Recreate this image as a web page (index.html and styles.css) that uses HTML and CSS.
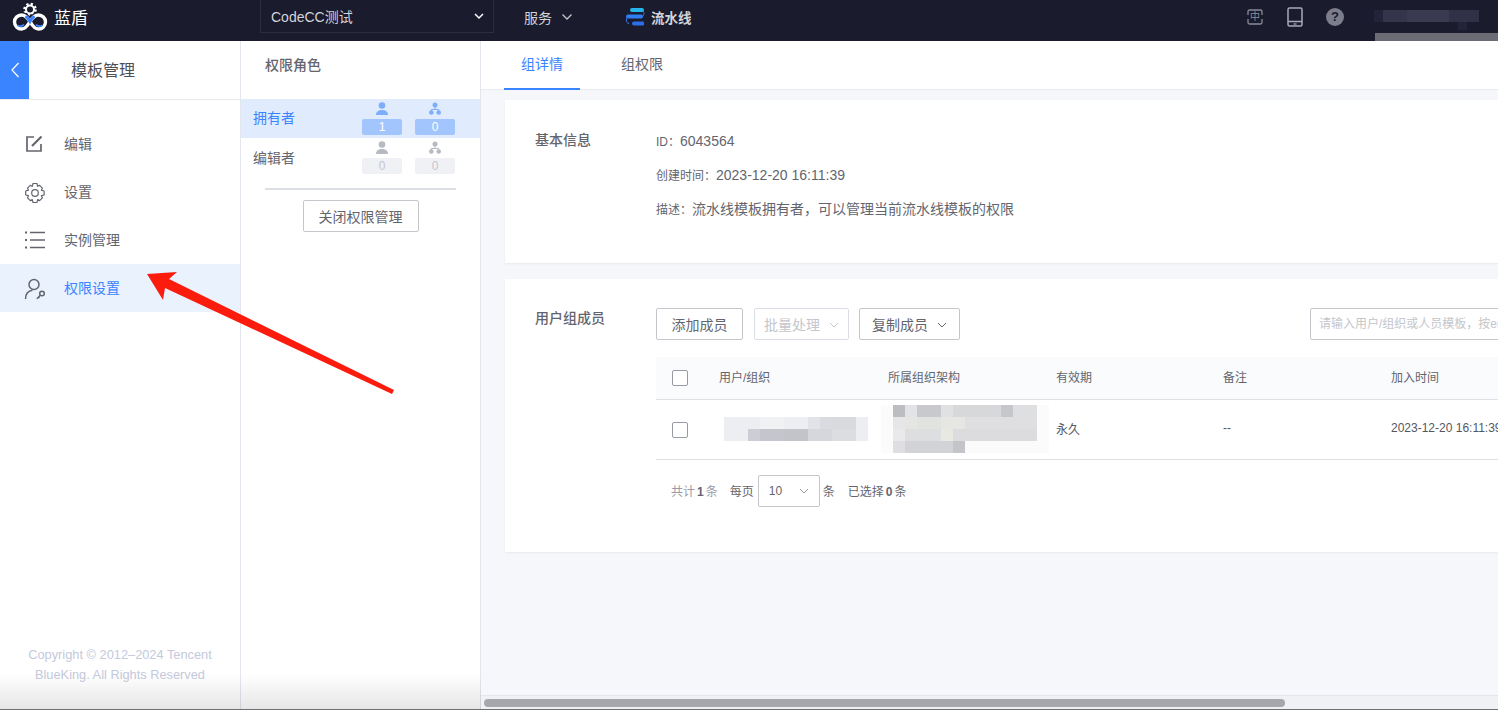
FILE: index.html
```html
<!DOCTYPE html>
<html>
<head>
    <title>蓝盾 - 权限设置</title>
    <meta charset="utf-8">
    <link rel="stylesheet" href="styles.css">
</head>
<body>
    <header class="topbar">
        <div class="logo">
            <svg width="36" height="32" viewBox="0 0 36 32">
                <g fill="none" stroke-linecap="round">
                    <circle cx="18" cy="8.500" r="5.600" stroke="#fff" stroke-width="2.400" stroke-dasharray="2.200 2.200" stroke-linecap="butt"/>
                    <circle cx="18" cy="8.500" r="4" stroke="#fff" stroke-width="2"/>
                    <path d="M18 20.500c-2.500-4-5-6.500-8.500-6.500a7 7 0 0 0 0 14c3.500 0 6-3 8.500-7.500" stroke="#1a1b2c" stroke-width="6"/>
                    <path d="M18 20.500c2.500-4 5-6.500 8.500-6.500a7 7 0 0 1 0 14c-3.500 0-6-3-8.500-7.500" stroke="#1a1b2c" stroke-width="6"/>
                    <path d="M18 20.500c-2.500-4-5-6.500-8.500-6.500a7 7 0 0 0 0 14c3.500 0 6-3 8.500-7.500" stroke="#fff" stroke-width="3.400"/>
                    <path d="M18 20.500c2.500-4 5-6.500 8.500-6.500a7 7 0 0 1 0 14c-3.500 0-6-3-8.500-7.500" stroke="#fff" stroke-width="3.400"/>
                    <path d="M14.500 16c1.500 1 2.500 2.800 3.500 4.500 1-1.700 2-3.500 3.500-4.500" stroke="#3a84ff" stroke-width="3"/>
                    <path d="M6 24.500c2 1.200 4 .5 5.500-.5M30 24.500c-2 1.200-4 .5-5.500-.5" stroke="#3a84ff" stroke-width="1.600"/>
                </g>
            </svg>
            <span>蓝盾</span>
        </div>
        <div class="project-select">
            <span>CodeCC测试</span>
            <svg width="12" height="8" viewBox="0 0 12 8"><path d="M2 2l4 4 4-4" fill="none" stroke="#fff" stroke-width="1.500"/></svg>
        </div>
        <div class="nav-service">
            <span>服务</span>
            <svg width="12" height="8" viewBox="0 0 12 8"><path d="M1.500 1.500l4.500 4.500 4.500-4.500" fill="none" stroke="#c4c6cc" stroke-width="1.300"/></svg>
        </div>
        <div class="nav-pipeline">
            <svg width="20" height="18" viewBox="0 0 20 18">
                <path d="M17 2.500c2.500 0 2.500 6 0 6M4 8.500c-3.500 0-3.500 7 0 7" fill="none" stroke="#2f7df0" stroke-width="1"/>
                <path d="M7 0h10a2 2 0 0 1 0 4H7a2 2 0 0 1 0-4z" fill="#27b5ee"/>
                <path d="M3 6.500h13a2 2 0 0 1 0 4H3a2 2 0 0 1 0-4z" fill="#2f7df0"/>
                <path d="M9 13.500h9a1 1 0 0 1 1 1v2a1 1 0 0 1-1 1H9a2 2 0 0 1 0-4z" fill="#2b6fe6"/>
            </svg>
            <span>流水线</span>
        </div>
        <div class="topbar-right">
            <div class="lang-icon">
                <svg width="16" height="16" viewBox="0 0 16 16"><path d="M1 6V2.500A1.500 1.500 0 0 1 2.500 1h11A1.500 1.500 0 0 1 15 2.500V6M1 10v3.500A1.500 1.500 0 0 0 2.500 15h11a1.500 1.500 0 0 0 1.500-1.500V10" fill="none" stroke="#8a8b99" stroke-width="1.300"/></svg>
                <span>中</span>
            </div>
            <svg class="tablet-icon" width="16" height="20" viewBox="0 0 16 20">
                <rect x="1" y="1" width="14" height="18" rx="1.500" fill="none" stroke="#a9aab5" stroke-width="1.500"/>
                <path d="M1 14.500h14" stroke="#a9aab5" stroke-width="1.500"/>
                <path d="M6.500 17h3" stroke="#a9aab5" stroke-width="1.200"/>
            </svg>
            <div class="help-icon">?</div>
            <svg class="user-blur" width="106" height="32" viewBox="0 0 106 32">
                <rect x="0" y="0" width="9" height="12" fill="#23243a"/>
                <rect x="9" y="0" width="24" height="12" fill="#34354a"/>
                <rect x="33" y="0" width="42" height="12" fill="#3a3b50"/>
                <rect x="75" y="0" width="30" height="12" fill="#303146"/>
                <rect x="84" y="12" width="9" height="8" fill="#23243a"/>
            </svg>
        </div>
        <div class="user-strip"></div>
    </header>

    <div class="layout">
        <aside class="sidebar">
            <div class="sidebar-head">
                <div class="back-btn">
                    <svg width="10" height="18" viewBox="0 0 10 18"><path d="M8.500 2L2 9l6.500 7" fill="none" stroke="#fff" stroke-width="1.200"/></svg>
                </div>
                <div class="sidebar-title">模板管理</div>
            </div>
            <ul class="menu">
                <li class="menu-item">
                    <svg width="20" height="20" viewBox="0 0 20 20"><path d="M10 3H3v14h14v-7" fill="none" stroke="#63656e" stroke-width="1.700"/><path d="M8 12L17.500 2.500" fill="none" stroke="#63656e" stroke-width="2.200"/></svg>
                    <span>编辑</span>
                </li>
                <li class="menu-item">
                    <svg width="22" height="22" viewBox="0 0 22 22"><path d="M9 1.500h4l.6 2.800 2-.9 2.800 2.800-1 2 2.700.8v4l-2.700.7 1 2.100-2.800 2.800-2-1-.6 2.900H9l-.7-2.900-2 1-2.800-2.800 1-2.100-2.800-.7v-4l2.800-.8-1-2 2.800-2.800 2 .9z" fill="none" stroke="#63656e" stroke-width="1.200" stroke-linejoin="round"/><circle cx="11" cy="11" r="3.300" fill="none" stroke="#63656e" stroke-width="1.200"/></svg>
                    <span>设置</span>
                </li>
                <li class="menu-item">
                    <svg width="22" height="20" viewBox="0 0 22 20"><path d="M6 2.500h15M6 10h15M6 17.500h15" stroke="#63656e" stroke-width="1.300"/><path d="M1 2.500h2M1 10h2M1 17.500h2" stroke="#63656e" stroke-width="2"/></svg>
                    <span>实例管理</span>
                </li>
                <li class="menu-item active">
                    <svg width="22" height="22" viewBox="0 0 22 22"><circle cx="10" cy="6.500" r="5" fill="none" stroke="#63656e" stroke-width="1.500"/><path d="M1.500 21c0-5 2.500-8 7-8.700" fill="none" stroke="#63656e" stroke-width="1.500"/><circle cx="18" cy="15.500" r="2.300" fill="none" stroke="#63656e" stroke-width="1.500"/><path d="M16.300 17.300l-3.500 3.500M14.500 19l1 1" stroke="#63656e" stroke-width="1.500"/></svg>
                    <span>权限设置</span>
                </li>
            </ul>
            <div class="copyright">Copyright © 2012–2024 Tencent<br>BlueKing. All Rights Reserved</div>
        </aside>

        <section class="roles">
            <div class="roles-title">权限角色</div>
            <div class="role-row active">
                <span class="role-name">拥有者</span>
                <div class="role-count">
                    <svg width="12" height="13" viewBox="0 0 12 13"><circle cx="6" cy="3.500" r="3.300"/><path d="M0 13c0-3.500 2.500-5 6-5s6 1.500 6 5z"/></svg>
                    <b>1</b>
                </div>
                <div class="role-count">
                    <svg width="12" height="13" viewBox="0 0 12 13"><circle cx="6" cy="3" r="2.500"/><circle cx="2.300" cy="10.500" r="2.300"/><circle cx="9.700" cy="10.500" r="2.300"/><path d="M6 5v2.500M2.300 9V7.500h7.400V9" fill="none" stroke-width="1"/></svg>
                    <b>0</b>
                </div>
            </div>
            <div class="role-row">
                <span class="role-name">编辑者</span>
                <div class="role-count">
                    <svg width="12" height="13" viewBox="0 0 12 13"><circle cx="6" cy="3.500" r="3.300"/><path d="M0 13c0-3.500 2.500-5 6-5s6 1.500 6 5z"/></svg>
                    <b>0</b>
                </div>
                <div class="role-count">
                    <svg width="12" height="13" viewBox="0 0 12 13"><circle cx="6" cy="3" r="2.500"/><circle cx="2.300" cy="10.500" r="2.300"/><circle cx="9.700" cy="10.500" r="2.300"/><path d="M6 5v2.500M2.300 9V7.500h7.400V9" fill="none" stroke-width="1"/></svg>
                    <b>0</b>
                </div>
            </div>
            <div class="roles-divider"></div>
            <button class="btn close-btn">关闭权限管理</button>
        </section>

        <main class="content">
            <div class="tabs">
                <a class="tab active">组详情</a>
                <a class="tab">组权限</a>
            </div>
            <div class="card info-card">
                <div class="card-title">基本信息</div>
                <div class="info-list">
                    <div class="info-line"><label>ID：</label>6043564</div>
                    <div class="info-line"><label>创建时间：</label>2023-12-20 16:11:39</div>
                    <div class="info-line"><label>描述：</label>流水线模板拥有者，可以管理当前流水线模板的权限</div>
                </div>
            </div>
            <div class="card member-card">
                <div class="card-title">用户组成员</div>
                <div class="member-body">
                    <div class="toolbar">
                        <button class="btn add-btn">添加成员</button>
                        <button class="btn batch-btn" disabled>批量处理
                            <svg width="10" height="6" viewBox="0 0 10 6"><path d="M1 1l4 4 4-4" fill="none" stroke="#c4c6cc"/></svg>
                        </button>
                        <button class="btn copy-btn">复制成员
                            <svg width="10" height="6" viewBox="0 0 10 6"><path d="M1 1l4 4 4-4" fill="none" stroke="#63656e"/></svg>
                        </button>
                        <input class="search" placeholder="请输入用户/组织或人员模板，按enter搜索">
                    </div>
                    <table class="member-table">
                        <thead>
                            <tr>
                                <th class="col-check"><span class="checkbox"></span></th>
                                <th class="col-user">用户/组织</th>
                                <th class="col-org">所属组织架构</th>
                                <th class="col-expire">有效期</th>
                                <th class="col-note">备注</th>
                                <th>加入时间</th>
                            </tr>
                        </thead>
                        <tbody>
                            <tr>
                                <td class="col-check"><span class="checkbox"></span></td>
                                <td>
                                    <svg class="mosaic-user" width="146" height="24" viewBox="0 0 12 2" shape-rendering="crispEdges">
                                        <rect width="12" height="2" fill="#eceef1"/>
                                        <rect x="3" width="2" height="1" fill="#f1f2f4"/>
                                        <rect x="7" width="1" height="1" fill="#e2e3e8"/>
                                        <rect x="8" width="1" height="1" fill="#dadbe1"/>
                                        <rect x="9" width="2" height="1" fill="#d9dade"/>
                                        <rect x="2" y="1" width="1" height="1" fill="#cdced5"/>
                                        <rect x="3" y="1" width="2" height="1" fill="#c5c6cd"/>
                                        <rect x="5" y="1" width="2" height="1" fill="#c3c4ca"/>
                                        <rect x="7" y="1" width="2" height="1" fill="#d6d7dc"/>
                                        <rect x="9" y="1" width="2" height="1" fill="#dcdde1"/>
                                    </svg>
                                </td>
                                <td>
                                    <svg class="mosaic-org" width="168" height="48" viewBox="0 0 14 4" shape-rendering="crispEdges">
                                        <rect width="14" height="4" fill="#fbfbfb"/>
                                        <rect x="1" width="1" height="1" fill="#bcbdc1"/>
                                        <rect x="2" width="1" height="1" fill="#e3e3e6"/>
                                        <rect x="3" width="2" height="1" fill="#c8c9cc"/>
                                        <rect x="5" width="1" height="1" fill="#e0e1e3"/>
                                        <rect x="6" width="4" height="1" fill="#d7d8da"/>
                                        <rect x="10" width="1" height="1" fill="#c6c7ca"/>
                                        <rect x="11" width="2" height="1" fill="#dedfe1"/>
                                        <rect x="1" y="1" width="1" height="1" fill="#e6e6e8"/>
                                        <rect x="2" y="1" width="1" height="1" fill="#e4e6e1"/>
                                        <rect x="3" y="1" width="2" height="1" fill="#e1e3e0"/>
                                        <rect x="5" y="1" width="2" height="1" fill="#e6e7e2"/>
                                        <rect x="7" y="1" width="6" height="1" fill="#dfdfe1"/>
                                        <rect x="1" y="2" width="1" height="1" fill="#e9e9eb"/>
                                        <rect x="2" y="2" width="3" height="1" fill="#dddedf"/>
                                        <rect x="5" y="2" width="1" height="1" fill="#e8e9e2"/>
                                        <rect x="6" y="2" width="7" height="1" fill="#dcdcdf"/>
                                        <rect x="1" y="3" width="1" height="1" fill="#dedee0"/>
                                        <rect x="2" y="3" width="4" height="1" fill="#d2d3d6"/>
                                        <rect x="6" y="3" width="1" height="1" fill="#c4c5c9"/>
                                    </svg>
                                </td>
                                <td class="cell-text">永久</td>
                                <td class="cell-text">--</td>
                                <td class="cell-text">2023-12-20 16:11:39</td>
                            </tr>
                        </tbody>
                    </table>
                    <div class="pager">
                        <span class="pager-total">共计<b>1</b>条</span>
                        <span class="pager-size">每页</span>
                        <div class="pager-select">
                            <span>10</span>
                            <svg width="10" height="6" viewBox="0 0 10 6"><path d="M1 1l4 4 4-4" fill="none" stroke="#979ba5"/></svg>
                        </div>
                        <span>条</span>
                        <span class="pager-selected">已选择<b>0</b>条</span>
                    </div>
                </div>
            </div>
            <div class="scrollbar"><div class="scroll-thumb"></div></div>
        </main>
    </div>

    <!-- red annotation arrow on top of the screenshot -->
    <svg class="arrow" width="1498" height="710" viewBox="0 0 1498 710">
        <polygon points="147,274 177,272 169,279 394,390 392,394 165,288 163,300" fill="#fb1c0e"/>
    </svg>
    <div class="bottom-shade"></div>
    <div class="bottom-line"></div>
</body>
</html>
```

FILE: styles.css
```css
* {
    margin: 0;
    padding: 0;
    box-sizing: border-box;
    font-family: "Liberation Sans", "Noto Sans CJK SC", sans-serif;
}

html, body {
    width: 1498px;
    height: 710px;
    overflow: hidden;
}

body {
    position: relative;
    background: #fff;
    color: #63656e;
    font-size: 14px;
}

/* top bar */
.topbar {
    height: 41px;
    background: #1a1b2c;
    display: flex;
    align-items: flex-start;
    position: relative;
    color: #d3d4da;
}

.logo {
    width: 260px;
    height: 33px;
    padding-left: 12px;
    display: flex;
    align-items: center;
    gap: 6px;
    color: #fff;
    font-size: 17px;
}

.project-select {
    width: 234px;
    height: 33px;
    border: 1px solid #2b2c3f;
    border-top: none;
    padding: 0 8px 0 10px;
    display: flex;
    align-items: center;
    justify-content: space-between;
    font-size: 14px;
}

.nav-service {
    margin-left: 30px;
    height: 33px;
    display: flex;
    align-items: center;
    gap: 9px;
    font-size: 14px;
    width: 101px;
}

.nav-pipeline {
    height: 33px;
    display: flex;
    align-items: center;
    gap: 6px;
    font-size: 13.5px;
    font-weight: bold;
}

.topbar-right {
    margin-left: auto;
    height: 33px;
    display: flex;
    align-items: center;
    padding-right: 18px;
}

.lang-icon {
    width: 16px;
    height: 16px;
    position: relative;
    margin-right: 24px;
    left: 1px;
}

.lang-icon span {
    position: absolute;
    left: 3px;
    top: 1px;
    font-size: 10px;
    line-height: 14px;
    color: #8a8b99;
}

.tablet-icon {
    margin-right: 24px;
    margin-left: 1px;
}

.help-icon {
    width: 18px;
    height: 18px;
    border-radius: 50%;
    background: #7b7c8c;
    color: #1a1b2c;
    font-size: 13px;
    font-weight: bold;
    line-height: 18px;
    text-align: center;
    margin-right: 30px;
    margin-left: -1px;
}

.user-blur {
    margin-top: 18px;
    height: 32px;
}

.user-strip {
    position: absolute;
    left: 1375px;
    right: 0;
    top: 33px;
    bottom: 0;
    background: #6b6b75;
}

/* three columns */
.layout {
    height: 669px;
    display: flex;
}

.sidebar {
    width: 241px;
    border-right: 1px solid #e4e6ee;
    display: flex;
    flex-direction: column;
}

.sidebar-head {
    height: 59px;
    display: flex;
    align-items: stretch;
    border-bottom: 1px solid #e8eaf0;
}

.back-btn {
    width: 29px;
    background: #3a84ff;
    display: flex;
    align-items: center;
    justify-content: center;
}

.sidebar-title {
    margin-left: 42px;
    font-size: 16px;
    line-height: 60px;
    color: #4d4f56;
}

.menu {
    list-style: none;
    margin-top: 20px;
}

.menu-item {
    height: 48px;
    position: relative;
    padding-left: 64px;
    line-height: 48px;
    font-size: 14px;
}

.menu-item svg {
    position: absolute;
    left: 24px;
    top: 14px;
}

.menu-item.active {
    background: #e9f2fd;
    color: #3a84ff;
}

.copyright {
    margin-top: auto;
    margin-bottom: 25px;
    text-align: center;
    font-size: 12.8px;
    line-height: 20px;
    color: #c4c9dc;
}

/* role list */
.roles {
    width: 240px;
    border-right: 1px solid #e4e6ee;
    display: flex;
    flex-direction: column;
    align-items: center;
}

.roles-title {
    width: 100%;
    padding-left: 24px;
    height: 58px;
    line-height: 48px;
    font-size: 14px;
    font-weight: 500;
}

.role-row {
    width: 100%;
    height: 40px;
    padding: 3px 25px 0 12px;
    display: flex;
    align-items: flex-start;
    gap: 13px;
}

.role-row.active {
    height: 39px;
    background: #e0ecfe;
    color: #3a84ff;
}

.role-name {
    width: 96px;
    line-height: 34px;
    font-size: 14px;
}

.role-row.active .role-name {
    line-height: 32px;
}

.role-count {
    width: 40px;
    display: flex;
    flex-direction: column;
    align-items: center;
    gap: 4px;
}

.role-count svg {
    fill: #b8bac1;
    stroke: #b8bac1;
    stroke-width: 0;
}

.role-count b {
    width: 40px;
    height: 16px;
    border-radius: 2px;
    background: #f0f1f5;
    color: #c4c6cc;
    font-size: 12px;
    font-weight: normal;
    line-height: 16px;
    text-align: center;
}

.role-row.active .role-count svg {
    fill: #7eaefa;
    stroke: #7eaefa;
}

.role-row.active .role-count b {
    background: #a3c5fd;
    color: #fff;
}

.roles-divider {
    width: 191px;
    height: 2px;
    background: #dcdee5;
    margin-top: 10px;
    margin-bottom: 10px;
}

.btn {
    height: 32px;
    background: #fff;
    border: 1px solid #c4c6cc;
    border-radius: 2px;
    color: #63656e;
    font-size: 14px;
}

.close-btn {
    width: 116px;
}

/* right panel */
.content {
    flex: 1;
    min-width: 0;
    background: #f5f7fb;
    position: relative;
    overflow: hidden;
}

.tabs {
    height: 49px;
    background: #fff;
    border-bottom: 1px solid #e8eaf0;
    padding-left: 23px;
    display: flex;
}

.tab {
    width: 76px;
    height: 49px;
    line-height: 47px;
    text-align: center;
    font-size: 14px;
    margin-right: 24px;
}

.tab.active {
    color: #3a84ff;
    border-bottom: 2px solid #3a84ff;
}

.card {
    width: 1100px;
    margin-left: 24px;
    background: #fff;
    box-shadow: 0 1px 2px rgba(0, 0, 0, 0.06);
    padding-left: 30px;
    display: flex;
}

.info-card {
    height: 163px;
    margin-top: 10px;
    padding-top: 30px;
}

.member-card {
    height: 273px;
    margin-top: 16px;
    padding-top: 29px;
}

.card-title {
    width: 121px;
    font-size: 14px;
    font-weight: 500;
    line-height: 20px;
    flex-shrink: 0;
}

.info-list {
    flex: 1;
    padding-top: 2px;
}

.info-line {
    height: 34px;
    font-size: 14px;
    line-height: 18px;
}

.info-line label {
    font-size: 12px;
}

.member-body {
    flex: 1;
    min-width: 0;
    padding-right: 30px;
}

.toolbar {
    display: flex;
    align-items: center;
    gap: 10px;
    height: 32px;
}

.add-btn {
    width: 87px;
}

.batch-btn {
    width: 95px;
    margin-left: 1px;
    color: #c4c6cc;
    border-color: #dcdee5;
}

.copy-btn {
    width: 101px;
}

.batch-btn svg, .copy-btn svg {
    margin-left: 5px;
    vertical-align: 2px;
}

.search {
    margin-left: auto;
    width: 265px;
    height: 32px;
    border: 1px solid #c4c6cc;
    border-radius: 2px;
    padding: 0 8px;
    font-size: 12px;
}

.search::placeholder {
    color: #c4c6cc;
}

.member-table {
    width: 100%;
    margin-top: 17px;
    border-collapse: collapse;
    table-layout: fixed;
    font-size: 12px;
}

.member-table th {
    height: 42px;
    padding-bottom: 2px;
    background: #fafbfd;
    border-bottom: 1px solid #dfe0e5;
    font-weight: normal;
    text-align: left;
}

.member-table th.col-check {
    padding-bottom: 0;
}

.member-table td {
    height: 60px;
    border-bottom: 1px solid #dfe0e5;
    white-space: nowrap;
}

.member-table td.cell-text {
    padding-bottom: 2px;
    color: #55575f;
}

.member-table td .checkbox {
    margin-top: 2px;
}

.col-check {
    width: 63px;
    padding-left: 16px;
}

.col-user {
    width: 169px;
}

.col-org {
    width: 168px;
}

.col-expire {
    width: 167px;
}

.col-note {
    width: 168px;
}

.checkbox {
    display: block;
    width: 16px;
    height: 16px;
    border: 1px solid #979ba5;
    border-radius: 2px;
    background: #fff;
}

.mosaic-user, .mosaic-org {
    display: block;
}

.mosaic-user {
    margin-left: 4px;
}

.mosaic-org {
    margin-left: -7px;
}

.pager {
    display: flex;
    align-items: center;
    height: 32px;
    margin-top: 15px;
    padding-left: 15px;
    font-size: 12px;
}

.pager b {
    margin: 0 2px;
    font-weight: bold;
    color: #63656e;
}

.pager-total {
    color: #979ba5;
}

.pager-size {
    margin-left: 12px;
}

.pager-select {
    width: 62px;
    height: 32px;
    margin: 0 3px 0 4px;
    border: 1px solid #c4c6cc;
    border-radius: 2px;
    padding: 0 10px;
    display: flex;
    align-items: center;
    justify-content: space-between;
}

.pager-selected {
    margin-left: 13px;
}

.scrollbar {
    position: absolute;
    left: 0;
    right: 0;
    bottom: 0;
    height: 15px;
    background: #f0f1f5;
    border-top: 1px solid #e4e6ee;
}

.scroll-thumb {
    width: 801px;
    height: 8px;
    margin: 3px 0 0 3px;
    border-radius: 4px;
    background: #a6a7ac;
}

/* overlays */
.arrow {
    position: absolute;
    left: 0;
    top: 0;
    pointer-events: none;
}

.bottom-shade {
    position: absolute;
    left: 0;
    right: 1017px;
    bottom: 0;
    height: 36px;
    background: linear-gradient(rgba(0, 0, 0, 0), rgba(0, 0, 0, 0.1));
}

.bottom-line {
    position: absolute;
    left: 0;
    bottom: 0;
    width: 1498px;
    height: 1px;
    background: #6f7074;
}
```
